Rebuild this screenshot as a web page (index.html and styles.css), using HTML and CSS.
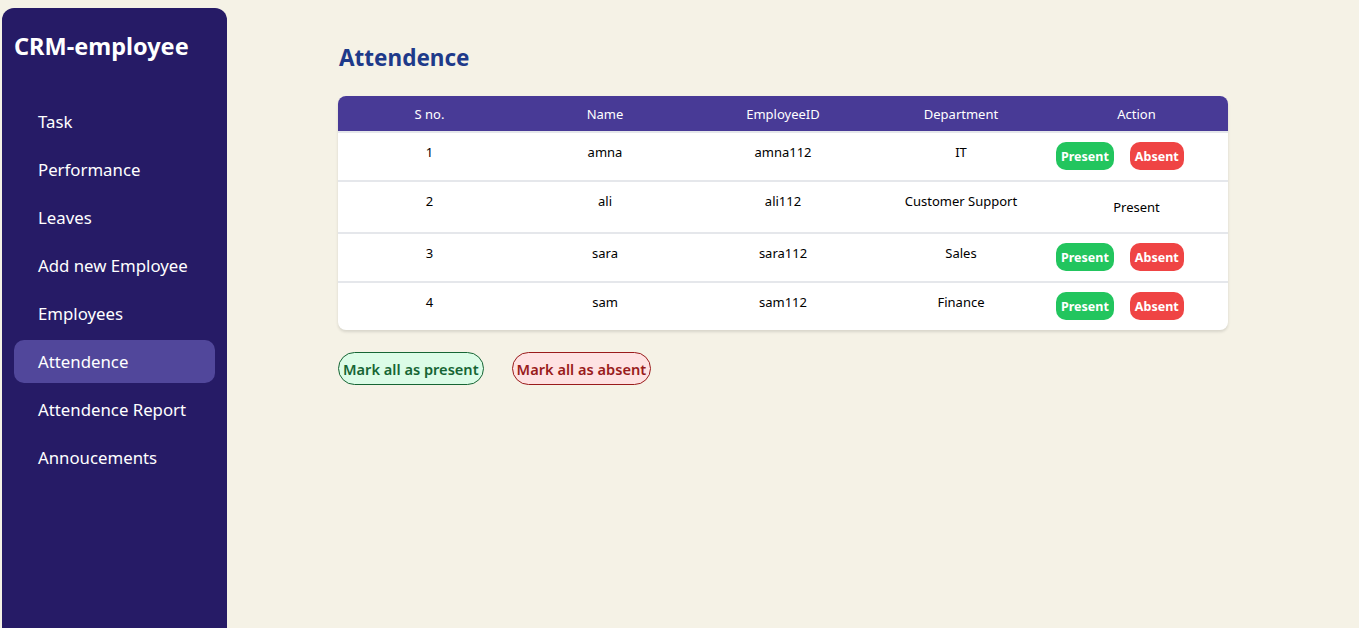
FILE: index.html
```html
<!DOCTYPE html>
<html lang="en">
<head>
<meta charset="utf-8">
<title>CRM-employee</title>
<link rel="stylesheet" href="styles.css">
</head>
<body>
<div class="layout">
  <aside class="sidebar">
    <div class="brand">CRM-employee</div>
    <nav class="nav">
      <a class="nav-item">Task</a>
      <a class="nav-item">Performance</a>
      <a class="nav-item">Leaves</a>
      <a class="nav-item">Add new Employee</a>
      <a class="nav-item">Employees</a>
      <a class="nav-item active">Attendence</a>
      <a class="nav-item">Attendence Report</a>
      <a class="nav-item">Annoucements</a>
    </nav>
  </aside>
  <main class="main">
    <h1 class="title">Attendence</h1>
    <div class="table-wrap">
      <table class="table">
        <thead>
          <tr><th>S no.</th><th>Name</th><th>EmployeeID</th><th>Department</th><th>Action</th></tr>
        </thead>
        <tbody>
          <tr><td>1</td><td>amna</td><td>amna112</td><td>IT</td><td class="action"><div class="btns"><button class="btn present">Present</button><button class="btn absent">Absent</button></div></td></tr>
          <tr><td>2</td><td>ali</td><td>ali112</td><td>Customer Support</td><td class="action"><span class="status">Present</span></td></tr>
          <tr><td>3</td><td>sara</td><td>sara112</td><td>Sales</td><td class="action"><div class="btns"><button class="btn present">Present</button><button class="btn absent">Absent</button></div></td></tr>
          <tr><td>4</td><td>sam</td><td>sam112</td><td>Finance</td><td class="action"><div class="btns"><button class="btn present">Present</button><button class="btn absent">Absent</button></div></td></tr>
        </tbody>
      </table>
    </div>
    <div class="bulk">
      <button class="bulk-btn all-present">Mark all as present</button>
      <button class="bulk-btn all-absent">Mark all as absent</button>
    </div>
  </main>
</div>
</body>
</html>
```
FILE: styles.css
```css
* { box-sizing: border-box; }
html, body { margin: 0; padding: 0; }
body {
  background: #f5f2e6;
  font-family: "Noto Sans", "Open Sans", sans-serif;
  overflow: hidden;
}
.layout {
  display: flex;
  padding: 8px 0 0 2px;
  height: 100vh;
}
.sidebar {
  width: 225px;
  flex-shrink: 0;
  height: calc(100vh - 8px);
  background: #261b66;
  border-radius: 12px 12px 0 0;
  padding: 22px 12px 0;
  color: #fff;
}
.brand {
  font-size: 23.5px;
  font-weight: 700;
  line-height: 32px;
  margin: 0 0 38px 0;
}
.nav { display: flex; flex-direction: column; gap: 5px; }
.nav-item {
  display: flex;
  align-items: center;
  height: 43px;
  padding-left: 24px;
  font-size: 16.8px;
  color: #fff;
  border-radius: 10px;
}
.nav-item.active { background: #51479b; }
.main {
  padding: 34px 0 0 111px;
}
.title {
  margin: 0 0 22px 1px;
  font-size: 22.5px;
  line-height: 32px;
  font-weight: 700;
  color: #1e3a8a;
}
.table-wrap {
  width: 890px;
  background: #fff;
  border-radius: 8px;
  overflow: hidden;
  box-shadow: 0 2px 3px rgba(0,0,0,0.12);
}
.table {
  width: 100%;
  border-collapse: collapse;
  table-layout: fixed;
  font-size: 13px;
}
.table th {
  background: #483a96;
  color: #fff;
  font-weight: 400;
  height: 36px;
  padding: 0;
  text-align: center;
}
.table th:first-child, .table td:first-child { padding-left: 5px; }
.table th:last-child, .table td:last-child { padding-right: 5px; }
.table td {
  text-align: center;
  vertical-align: top;
  padding: 9px 0 10px;
  line-height: 20px;
  color: #000;
  border-top: 2px solid #e5e7eb;
}
.table td.action { vertical-align: middle; }
.btns { display: flex; gap: 16px; padding-left: 6px; }
.btn {
  border: 0;
  height: 28px;
  padding: 0 5px;
  border-radius: 10px;
  color: #fff;
  font-family: inherit;
  font-weight: 700;
  font-size: 12.5px;
}
.btn.present { background: #22c55e; }
.btn.absent { background: #ef4444; }
.status { display: inline-block; padding: 6px 0 5px; line-height: 20px; }
.bulk { display: flex; gap: 28px; margin-top: 22px; }
.bulk-btn {
  height: 33px;
  padding: 0 4px;
  border-radius: 999px;
  font-family: inherit;
  font-size: 14.6px;
  font-weight: 600;
}
.all-present { background: #dcfce7; border: 1px solid #166534; color: #166534; }
.all-absent { background: #fee2e2; border: 1px solid #991b1b; color: #991b1b; }
```
